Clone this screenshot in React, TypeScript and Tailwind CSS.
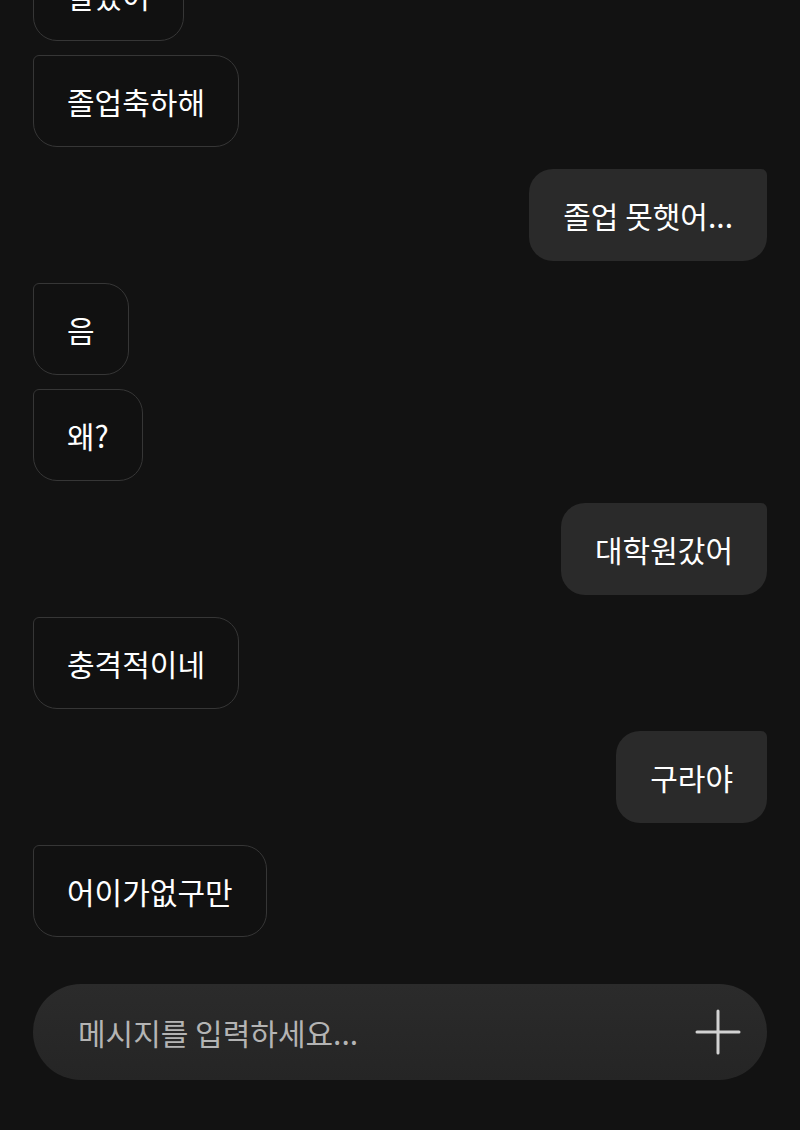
import React from "react";

type Msg = { id: number; text: string; mine: boolean };

const messages: Msg[] = [
  { id: 0, text: "알았어", mine: false },
  { id: 1, text: "졸업축하해", mine: false },
  { id: 2, text: "졸업 못햇어...", mine: true },
  { id: 3, text: "음", mine: false },
  { id: 4, text: "왜?", mine: false },
  { id: 5, text: "대학원갔어", mine: true },
  { id: 6, text: "충격적이네", mine: false },
  { id: 7, text: "구라야", mine: true },
  { id: 8, text: "어이가없구만", mine: false },
];

const font = { fontFamily: '"Noto Sans CJK KR", "Noto Sans", sans-serif' };

function Bubble({ msg, gap }: { msg: Msg; gap: string }) {
  return (
    <div className={`flex ${msg.mine ? "justify-end" : "justify-start"} ${gap}`}>
      <div
        className={`border px-[33px] py-[28px] text-[30px] leading-[34px] whitespace-nowrap text-white ${
          msg.mine
            ? "rounded-[24px] rounded-tr-[6px] border-transparent bg-[#2a2a2a]"
            : "rounded-[24px] rounded-tl-[6px] border-[#363636] bg-[#111111]"
        }`}
      >
        {msg.text}
      </div>
    </div>
  );
}

export default function App() {
  return (
    <div className="flex h-screen flex-col overflow-hidden bg-[#121212]" style={font}>
      <div className="flex flex-1 flex-col justify-end overflow-hidden px-[33px] pb-[47px]">
        {messages.map((msg, i) => {
          const prev = messages[i - 1];
          const gap = !prev ? "" : prev.mine === msg.mine ? "mt-[14px]" : "mt-[22px]";
          return <Bubble key={msg.id} msg={msg} gap={gap} />;
        })}
      </div>

      <div className="px-[33px] pb-[50px]">
        <div className="flex h-[96px] items-center justify-between rounded-full bg-gradient-to-b from-[#2b2b2b] to-[#252525] pl-[45px] pr-[26px]">
          <span className="text-[30px] text-[#b4b4b4]">메시지를 입력하세요...</span>
          <svg width="46" height="46" viewBox="0 0 46 46" fill="none">
            <path d="M23 2v42M2 23h42" stroke="#d2d2d2" strokeWidth="3" strokeLinecap="round" />
          </svg>
        </div>
      </div>
    </div>
  );
}
